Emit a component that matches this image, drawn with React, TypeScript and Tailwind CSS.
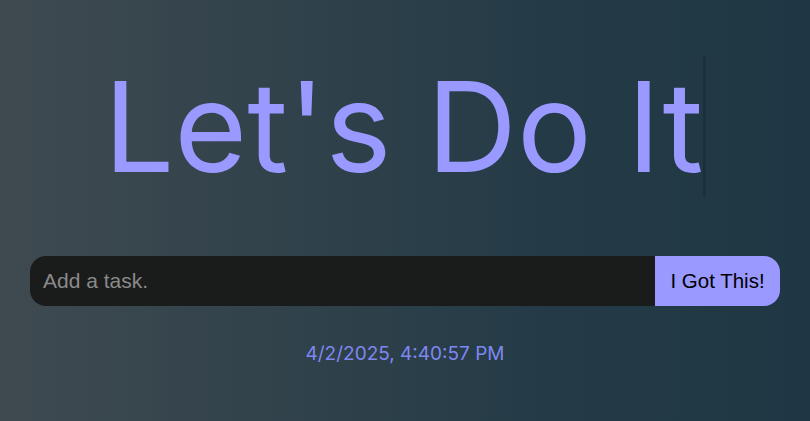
import { useState } from 'react';

export default function App() {
  const [task, setTask] = useState('');

  return (
    <div className="min-h-screen w-full bg-[linear-gradient(to_right,#3f4a50,#243b47_67%,#1f3744)] flex flex-col items-center font-['Liberation_Sans',Arial,sans-serif]">
      {/* Title with typing caret */}
      <h1 className="mt-[56px] inline-block overflow-hidden whitespace-nowrap border-r-[3px] border-[rgba(0,0,0,0.14)] font-['Inter',sans-serif] text-[125px] leading-[141px] text-[#9999ff] font-normal">
        Let's Do It
      </h1>

      {/* Task input */}
      <div className="mt-[59px] flex w-[750px] h-[50px] rounded-[16px] overflow-hidden">
        <input
          value={task}
          onChange={(e) => setTask(e.target.value)}
          placeholder="Add a task."
          className="flex-1 min-w-0 bg-[#1a1c1b] pl-[13px] text-[21px] text-gray-200 placeholder:text-[#8a8a8a] outline-none"
        />
        <button className="w-[125px] bg-[#9999ff] text-[20.5px] text-black">
          I Got This!
        </button>
      </div>

      {/* Clock */}
      <p className="mt-[34px] font-['Inter',sans-serif] text-[19px] text-[#7f87f2]">4/2/2025, 4:40:57 PM</p>
    </div>
  );
}
